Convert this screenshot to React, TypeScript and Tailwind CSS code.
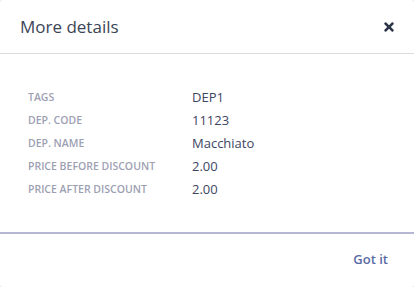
import React from 'react';
import { FaTimes } from 'react-icons/fa';

const DETAILS = [
  { label: 'Tags', value: 'DEP1' },
  { label: 'Dep. code', value: '11123' },
  { label: 'Dep. name', value: 'Macchiato' },
  { label: 'Price before discount', value: '2.00' },
  { label: 'Price after discount', value: '2.00' },
];

const App: React.FC = () => {
  return (
    <div className="w-[414px] h-[287px] bg-[#e9e9ec]" style={{ fontFamily: '"Open Sans", "Noto Sans", sans-serif' }}>
      <div className="h-full bg-white rounded-[3px] flex flex-col">
        {/* Header */}
        <div className="h-[54px] flex items-center justify-between pl-5 pr-[18px] border-b border-[#dcdcdf]">
          <h2 className="text-[17px] text-[#3b4556] font-normal pt-[1px]">More details</h2>
          <button className="text-[#2c3547] pt-[1px]">
            <FaTimes size={14} />
          </button>
        </div>

        {/* Body */}
        <div className="flex-1 pt-[32px] pl-7">
          {DETAILS.map((row) => (
            <div key={row.label} className="flex items-center h-[23px]">
              <span className="w-[164px] text-[10.5px] uppercase text-[#9d9fb3] font-semibold">
                {row.label}
              </span>
              <span className="text-[13px] text-[#3d4663]">{row.value}</span>
            </div>
          ))}
        </div>

        {/* Footer */}
        <div className="h-[55px] border-t-2 border-[#b6b7d2] flex items-center justify-end pr-[26px]">
          <button className="text-[13px] font-semibold text-[#5a6ca6] pb-[1px]">Got it</button>
        </div>
      </div>
    </div>
  );
};

export default App;
